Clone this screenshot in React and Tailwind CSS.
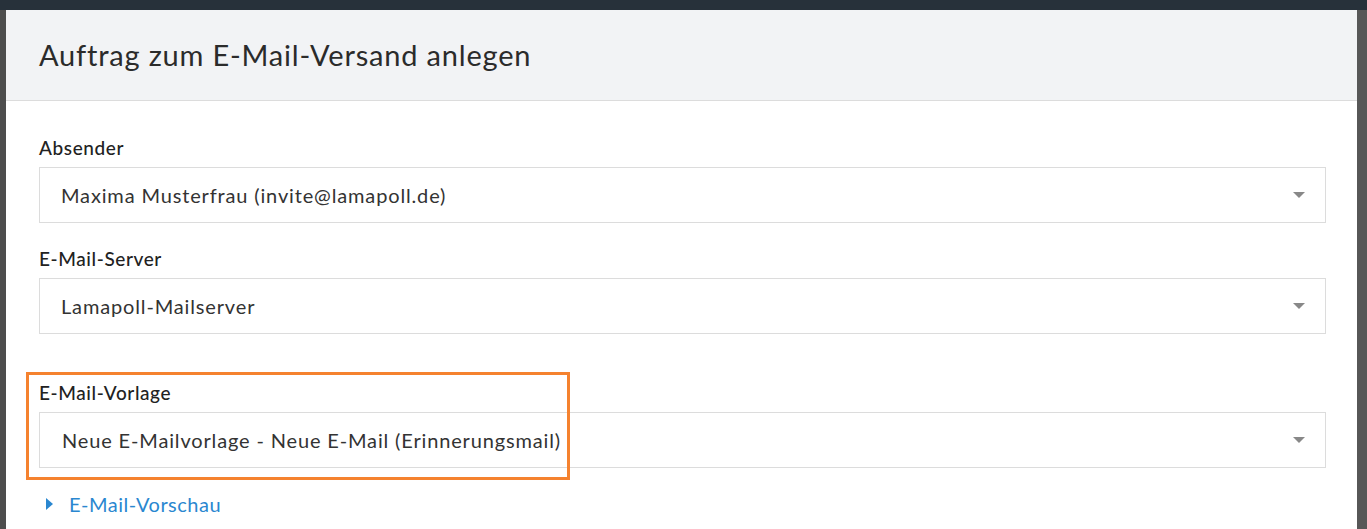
const fields = [
  { label: 'Absender', value: 'Maxima Musterfrau (invite@lamapoll.de)' },
  { label: 'E-Mail-Server', value: 'Lamapoll-Mailserver' },
];

function Select({ value, indent = 'pl-[21px]' }) {
  return (
    <div className={`flex h-[56px] items-center justify-between border border-[#dcdcdc] bg-white pr-[20px] ${indent}`}>
      <span className="text-[20px] tracking-[0.85px] text-[#333]">{value}</span>
      <span className="h-0 w-0 border-x-[6px] border-t-[6px] border-x-transparent border-t-[#888]" />
    </div>
  );
}

function Field({ label, value, indent }) {
  return (
    <div className="flex flex-col">
      <label className="mb-[7px] text-[19px] leading-[24px] font-medium tracking-[0.6px] text-[#222]">{label}</label>
      <Select value={value} indent={indent} />
    </div>
  );
}

export default function App() {
  return (
    <div className="flex h-[529px] flex-col overflow-hidden bg-[#27313a] font-['Lato',sans-serif]">
      <div className="h-[10px] shrink-0" />
      <div className="flex flex-1">
        <div className="w-[6px] bg-[#4d4d4d]" />
        <div className="flex flex-1 flex-col bg-white">
          <div className="flex h-[91px] items-center border-b border-[#dcdcdc] bg-[#f2f3f5] px-[33px]">
            <h1 className="text-[29px] tracking-[0.8px] text-[#2b2b2b]">Auftrag zum E-Mail-Versand anlegen</h1>
          </div>
          <div className="flex flex-col pt-[35px] pl-[33px] pr-[31px]">
            <div className="flex flex-col gap-[24px]">
              {fields.map((f) => (
                <Field key={f.label} {...f} />
              ))}
            </div>
            <div className="relative mt-[47px]">
              <Field label="E-Mail-Vorlage" value="Neue E-Mailvorlage - Neue E-Mail (Erinnerungsmail)" indent="pl-[22px]" />
              <div className="pointer-events-none absolute -top-[9px] -left-[13px] h-[108px] w-[544px] border-[3px] border-[#f5822f]" />
            </div>
            <a className="mt-[21px] flex items-center gap-[16px] pl-[7px] text-[20px] tracking-[0.5px] text-[#2a87d0]">
              <span className="h-0 w-0 border-y-[6px] border-l-[7px] border-y-transparent border-l-[#2a87d0]" />
              E-Mail-Vorschau
            </a>
          </div>
        </div>
        <div className="w-[10px] bg-[#575757]" />
      </div>
    </div>
  );
}
